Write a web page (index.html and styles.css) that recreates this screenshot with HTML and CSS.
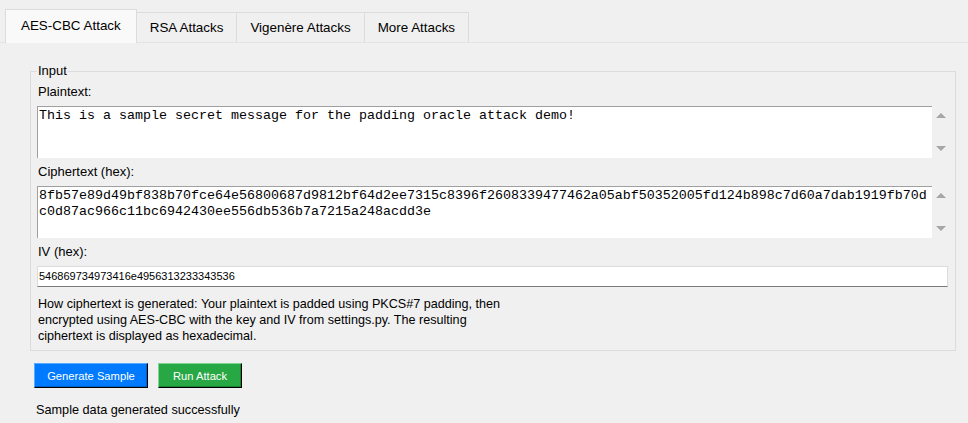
FILE: index.html
```html
<!DOCTYPE html>
<html lang="en">
<head>
<meta charset="utf-8">
<title>Padding Oracle Attacks</title>
<link rel="stylesheet" href="styles.css">
</head>
<body>
<div class="tabs">
  <div class="tab active">AES-CBC Attack</div>
  <div class="tab">RSA Attacks</div>
  <div class="tab">Vigenère Attacks</div>
  <div class="tab">More Attacks</div>
</div>
<main class="panel">
  <fieldset class="group">
    <legend>Input</legend>
    <div class="label">Plaintext:</div>
    <div class="text-row">
      <div class="textbox">This is a sample secret message for the padding oracle attack demo!</div>
      <div class="scroll"><span class="arrow up"></span><span class="arrow down"></span></div>
    </div>
    <div class="label">Ciphertext (hex):</div>
    <div class="text-row">
      <div class="textbox">8fb57e89d49bf838b70fce64e56800687d9812bf64d2ee7315c8396f2608339477462a05abf50352005fd124b898c7d60a7dab1919fb70dc0d87ac966c11bc6942430ee556db536b7a7215a248acdd3e</div>
      <div class="scroll"><span class="arrow up"></span><span class="arrow down"></span></div>
    </div>
    <div class="label">IV (hex):</div>
    <div class="entry">546869734973416e4956313233343536</div>
    <p class="desc">How ciphertext is generated: Your plaintext is padded using PKCS#7 padding, then encrypted using AES-CBC with the key and IV from settings.py. The resulting ciphertext is displayed as hexadecimal.</p>
  </fieldset>
  <div class="buttons">
    <button class="btn btn-blue">Generate Sample</button>
    <button class="btn btn-green">Run Attack</button>
  </div>
  <div class="status">Sample data generated successfully</div>
</main>
</body>
</html>
```
FILE: styles.css
```css
html, body {
  margin: 0;
  padding: 0;
}
body {
  background: #f0f0f0;
  font-family: "Liberation Sans", Arial, sans-serif;
  font-size: 13px;
  line-height: 16px;
  color: #000;
  height: 423px;
  overflow: hidden;
}

/* Tabs */
.tabs {
  display: flex;
  align-items: flex-end;
  height: 43px;
  box-sizing: border-box;
  padding-left: 5px;
  border-bottom: 1px solid #e3e3e3;
}
.tab {
  box-sizing: border-box;
  height: 30px;
  padding: 7px 13px 0;
  border: 1px solid #dcdcdc;
  border-bottom: none;
  margin-left: -1px;
  background: #f0f0f0;
  white-space: nowrap;
  font-size: 13.4px;
}
.tab.active {
  margin-left: 0;
  height: 34px;
  margin-bottom: -1px;
  padding: 8px 15px 0;
  background: #f9f9f9;
}

/* Group */
.panel {
  display: block;
}
.group {
  margin: 20px 0 0 30px;
  width: 926px;
  box-sizing: border-box;
  padding: 0 6px 6px;
  border: 1px solid #dcdcdc;
  min-width: 0;
}
.group legend {
  padding: 0 1px;
  line-height: 16px;
}
.label {
  margin: 5px 0 6px 1px;
}
.text-row + .label {
  margin-top: 6px;
}
.text-row {
  display: flex;
}
.textbox {
  width: 896px;
  height: 52px;
  box-sizing: border-box;
  background: #fff;
  border-top: 1px solid #a0a0a0;
  border-left: 1px solid #a0a0a0;
  padding: 1px 0 0 1px;
  font-family: "Liberation Mono", "Courier New", monospace;
  font-size: 13.33px;
  line-height: 16px;
  white-space: pre-wrap;
  word-break: break-all;
  overflow: hidden;
}
.scroll {
  width: 17px;
  display: flex;
  flex-direction: column;
  justify-content: space-between;
  align-items: flex-start;
  padding: 7px 0 7px 4px;
  box-sizing: border-box;
}
.arrow {
  width: 0;
  height: 0;
  border-left: 5px solid transparent;
  border-right: 5px solid transparent;
}
.arrow.up {
  border-bottom: 5px solid #a6a6a6;
}
.arrow.down {
  border-top: 5px solid #a6a6a6;
}
.entry {
  width: 911px;
  height: 21px;
  box-sizing: border-box;
  background: #fff;
  border: 1px solid #dcdcdc;
  border-bottom-color: #7a7a7a;
  padding-left: 1px;
  font-size: 11px;
  line-height: 19px;
}
.desc {
  margin: 9px 0 0 1px;
  max-width: 482px;
  font-size: 12.6px;
  line-height: 16px;
}

/* Buttons */
.buttons {
  display: flex;
  gap: 10px;
  margin: 12px 0 0 34px;
}
.btn {
  height: 25px;
  box-sizing: border-box;
  border: 1px solid;
  padding: 0;
  font-family: "Liberation Sans", Arial, sans-serif;
  font-size: 11.2px;
  color: #fff;
  cursor: pointer;
}
.btn-blue {
  width: 114px;
  background: #007bff;
  border-color: #5aa8ff #000 #000 #5aa8ff;
  box-shadow: inset -1px -1px 0 #0060c8;
}
.btn-green {
  width: 84px;
  background: #28a745;
  border-color: #7fd493 #000 #000 #7fd493;
  box-shadow: inset -1px -1px 0 #1d8336;
}
.status {
  margin: 14px 0 0 36px;
  font-size: 12.7px;
}
```
